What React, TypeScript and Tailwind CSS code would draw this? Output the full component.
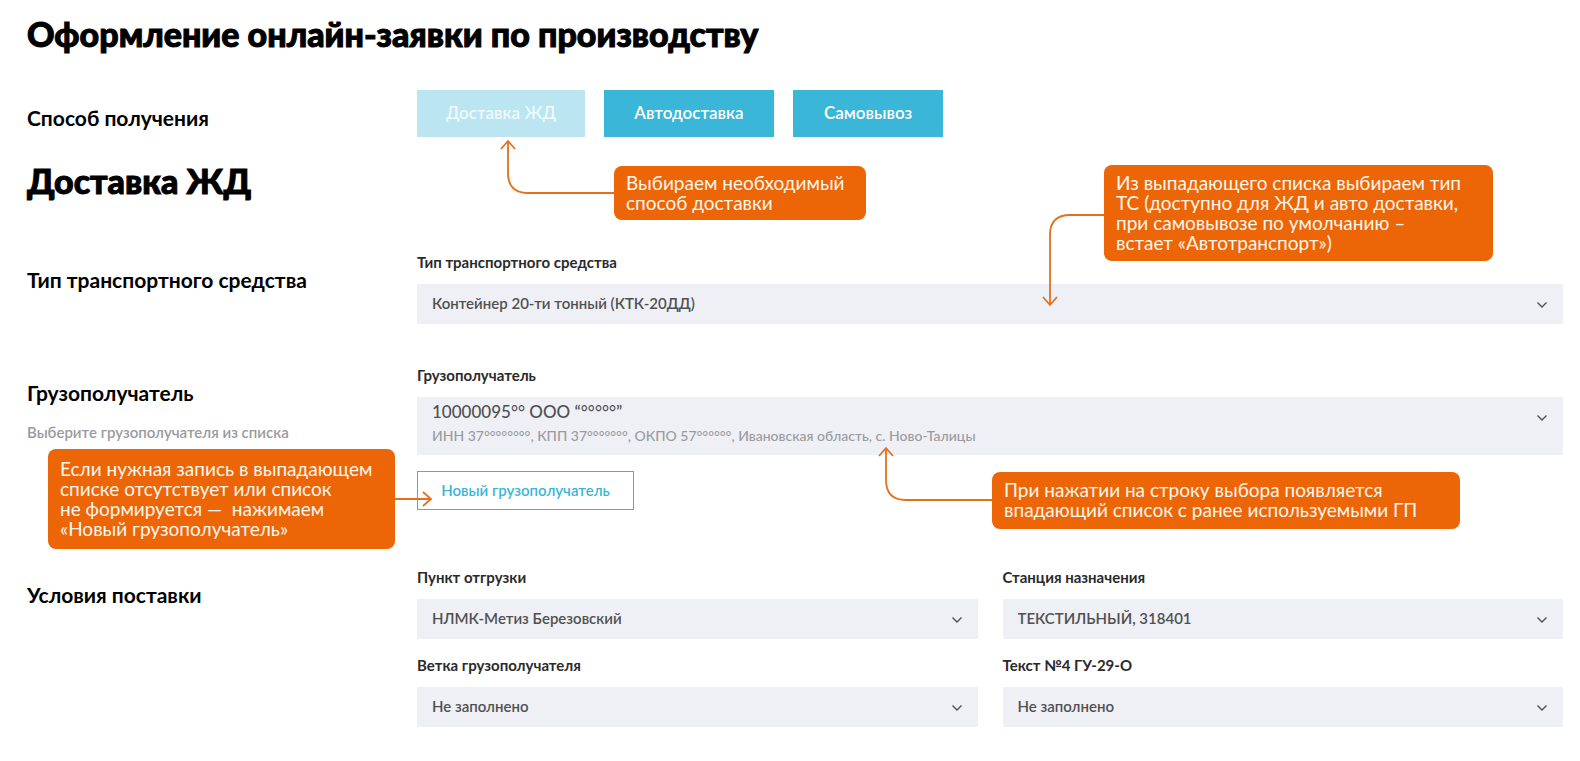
import type { ReactNode } from "react";

function Section({ title, hint, children }: { title: string; hint?: string; children: ReactNode }) {
  return (
    <section className="grid grid-cols-[390px_1fr]">
      <div className="pt-4">
        <h3 className="text-[21px] leading-6 font-bold">{title}</h3>
        {hint && <p className="pt-[15px] text-[15px] leading-6 font-semibold text-[#999b9e]">{hint}</p>}
      </div>
      <div className="relative">{children}</div>
    </section>
  );
}

function Chevron() {
  return (
    <svg
      className="pointer-events-none absolute top-[17px] right-[15px]"
      width="12"
      height="8"
      fill="none"
      stroke="#505052"
      strokeWidth="1.4"
      aria-hidden="true"
    >
      <path d="M1.5 1.5L6 6L10.5 1.5" />
    </svg>
  );
}

function Field({ id, label, value, details }: { id: string; label: string; value: string; details?: string }) {
  return (
    <div>
      <label htmlFor={id} className="block h-8 text-[15px] leading-5 font-bold text-[#2a2a2a]">{label}</label>
      <div className="relative">
        <select
          id={id}
          aria-describedby={details ? id + "-details" : undefined}
          className={
            details
              ? "block h-[58px] w-full appearance-none bg-[#eff0f5] px-[15px] pb-7 text-[17px] font-medium text-[#505052]"
              : "block h-10 w-full appearance-none bg-[#eff0f5] px-[15px] pb-0.5 text-[15px] font-semibold text-[#505052]"
          }
        >
          <option>{value}</option>
        </select>
        {details && (
          <p id={id + "-details"} className="pointer-events-none absolute top-[29px] left-[15px] text-sm leading-5 font-medium text-[#999b9e]">
            {details}
          </p>
        )}
        <Chevron />
      </div>
    </div>
  );
}

function Note({ className, children }: { className: string; children: ReactNode }) {
  return (
    <div className={"absolute z-10 rounded-lg bg-[#ec6608] px-3 text-[19px] leading-5 whitespace-pre text-[#fff6ec] " + className}>
      {children}
    </div>
  );
}

function Arrow({ className, width, height, d }: { className: string; width: number; height: number; d: string }) {
  return (
    <svg
      className={"pointer-events-none absolute z-10 " + className}
      width={width}
      height={height}
      fill="none"
      stroke="#e2701f"
      strokeWidth="1.8"
      aria-hidden="true"
    >
      <path d={d} />
    </svg>
  );
}

export default function App() {
  return (
    <main className="bg-white pt-[14px] pr-[17px] pb-8 pl-[27px] font-['Lato','Noto_Sans',sans-serif] text-black">
      <h1 className="text-[34px] leading-10 font-black [-webkit-text-stroke:1px_black]">Оформление онлайн-заявки по производству</h1>

      <div className="mt-9 grid grid-cols-[390px_1fr]">
        <h3 className="pt-4 text-[21px] leading-6 font-bold">Способ получения</h3>
        <div className="relative flex gap-[19px]">
          <button disabled className="h-[47px] w-[168px] bg-[#bbe6f1] pb-0.5 text-[17px] font-semibold text-[#eefafd]">Доставка ЖД</button>
          <button className="h-[47px] w-[170px] bg-[#39b6d8] pb-0.5 text-[17px] font-semibold text-white">Автодоставка</button>
          <button className="h-[47px] w-[150px] bg-[#39b6d8] pb-0.5 text-[17px] font-semibold text-white">Самовывоз</button>
          <Arrow className="top-[49px] left-[82px]" width={116} height={57} d="M9 2V34Q9 54 29 54H116M2 10L9 2L16 10" />
          <Note className="top-[76px] left-[197px] w-[252px] pt-[7px] pb-[7px]">{"Выбираем необходимый\nспособ доставки"}</Note>
        </div>
      </div>

      <h2 className="mt-6 text-[34px] leading-10 font-black [-webkit-text-stroke:1px_black]">Доставка ЖД</h2>

      <div className="mt-[51px]">
        <Section title="Тип транспортного средства">
          <Field id="vehicle" label="Тип транспортного средства" value="Контейнер 20-ти тонный (КТК-20ДД)" />
          <Arrow className="-top-[40px] left-[624px]" width={64} height={96} d="M64 3H29Q9 3 9 23V93M2 85L9 93L16 85" />
          <Note className="-top-[87px] left-[687px] w-[389px] pt-2 pb-2">
            {"Из выпадающего списка выбираем тип\nТС (доступно для ЖД и авто доставки,\nпри самовывозе по умолчанию –\nвстает «Автотранспорт»)"}
          </Note>
        </Section>
      </div>

      <div className="mt-[41px]">
        <Section title="Грузополучатель" hint="Выберите грузополучателя из списка">
          <Field
            id="consignee"
            label="Грузополучатель"
            value={"10000095°° ООО “°°°°°”"}
            details="ИНН 37°°°°°°°°, КПП 37°°°°°°°, ОКПО 57°°°°°°, Ивановская область, с. Ново-Талицы"
          />
          <button className="mt-4 h-[39px] w-[217px] border border-[#39b6d8] text-[15px] font-semibold text-[#39b6d8]">
            Новый грузополучатель
          </button>
          <Arrow className="top-[81px] left-[460px]" width={116} height={57} d="M9 2V34Q9 54 29 54H116M2 10L9 2L16 10" />
          <Note className="top-[107px] left-[575px] w-[468px] pt-2 pb-[9px]">
            {"При нажатии на строку выбора появляется\nвпадающий список с ранее используемыми ГП"}
          </Note>
          <Arrow className="top-[124px] -left-[23px]" width={40} height={20} d="M0 10H37M29 3L37 10L29 17" />
          <Note className="top-[84px] -left-[369px] w-[347px] pt-[10px] pb-[10px]">
            {"Если нужная запись в выпадающем\nсписке отсутствует или список\nне формируется —  нажимаем\n«Новый грузополучатель»"}
          </Note>
        </Section>
      </div>

      <div className="mt-[57px]">
        <Section title="Условия поставки">
          <div className="grid grid-cols-2 gap-x-[25px] gap-y-4">
            <Field id="origin" label="Пункт отгрузки" value="НЛМК-Метиз Березовский" />
            <Field id="station" label="Станция назначения" value="ТЕКСТИЛЬНЫЙ, 318401" />
            <Field id="branch" label="Ветка грузополучателя" value="Не заполнено" />
            <Field id="text4" label="Текст №4 ГУ-29-О" value="Не заполнено" />
          </div>
        </Section>
      </div>
    </main>
  );
}
